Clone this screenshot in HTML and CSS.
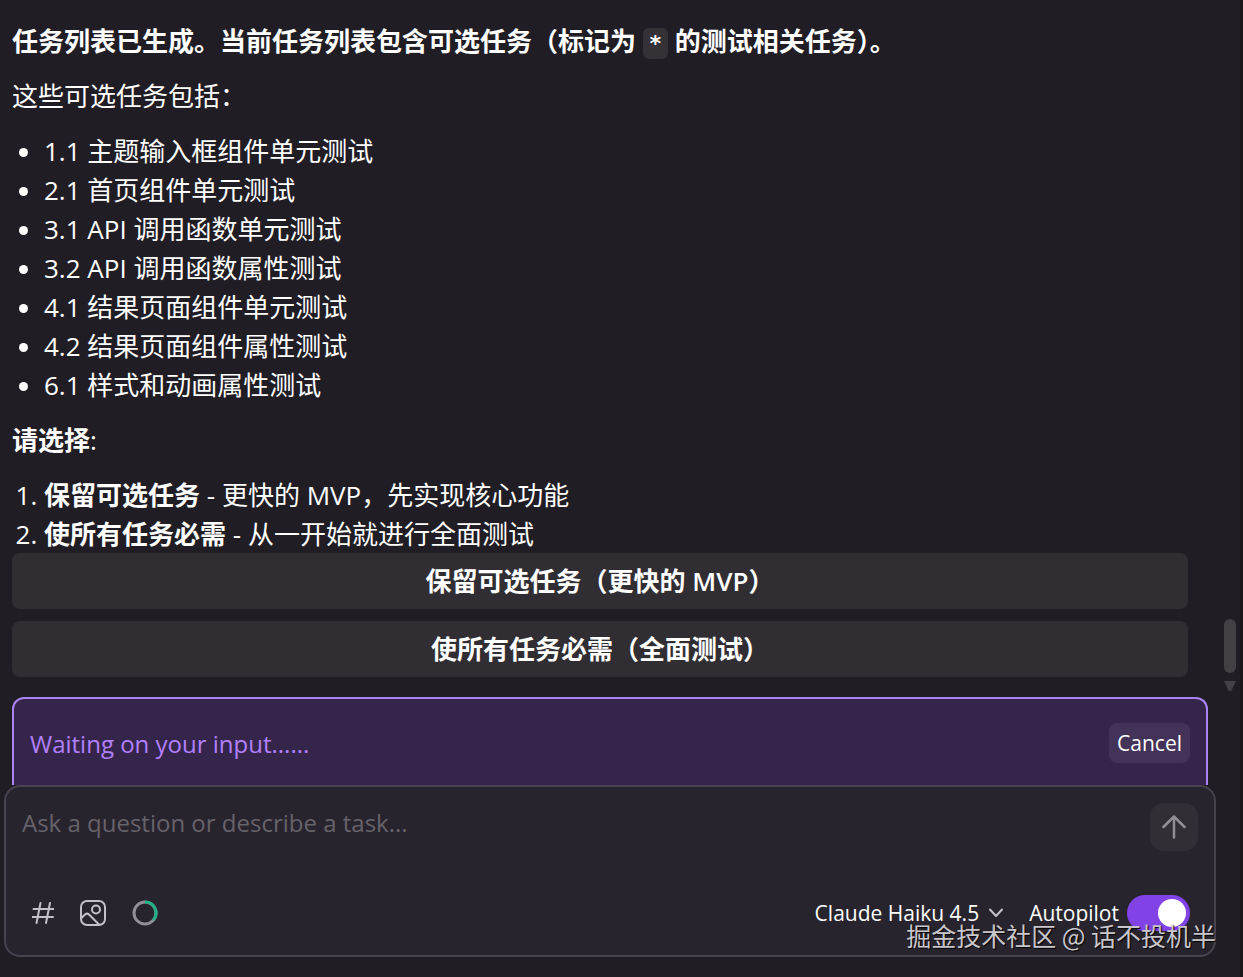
FILE: index.html
```html
<!DOCTYPE html>
<html lang="zh-CN">
<head>
    <meta charset="UTF-8">
    <meta name="viewport" content="width=device-width, initial-scale=1.0">
    <title>任务列表</title>
    <link rel="stylesheet" href="styles.css">
</head>
<body>
    <div class="panel">
        <main class="chat">
            <div class="message">
                <p><strong>任务列表已生成。当前任务列表包含可选任务（标记为 <code>*</code> 的测试相关任务）。</strong></p>
                <p>这些可选任务包括：</p>
                <ul>
                    <li>1.1 主题输入框组件单元测试</li>
                    <li>2.1 首页组件单元测试</li>
                    <li>3.1 API 调用函数单元测试</li>
                    <li>3.2 API 调用函数属性测试</li>
                    <li>4.1 结果页面组件单元测试</li>
                    <li>4.2 结果页面组件属性测试</li>
                    <li>6.1 样式和动画属性测试</li>
                </ul>
                <p><strong>请选择</strong>:</p>
                <ol>
                    <li><strong>保留可选任务</strong> - 更快的 MVP，先实现核心功能</li>
                    <li><strong>使所有任务必需</strong> - 从一开始就进行全面测试</li>
                </ol>
            </div>

            <div class="options">
                <button type="button" class="option">保留可选任务（更快的 MVP）</button>
                <button type="button" class="option">使所有任务必需（全面测试）</button>
            </div>

            <div class="status">
                <span>Waiting on your input......</span>
                <button type="button" class="cancel">Cancel</button>
            </div>

            <div class="scrollbar">
                <div class="thumb"></div>
                <div class="arrow"></div>
            </div>
        </main>

        <form class="composer">
            <div class="composer-top">
                <textarea aria-label="Message" placeholder="Ask a question or describe a task..."></textarea>
                <button type="button" class="send" aria-label="Send">
                    <svg width="24" height="24" viewBox="0 0 24 24"><path d="M12 22.500V1.500M1.500 12 12 1.500 22.500 12"/></svg>
                </button>
            </div>
            <div class="composer-bottom">
                <div class="tools">
                    <button type="button" aria-label="Add context">
                        <svg width="22" height="22" viewBox="0 0 22 22"><path d="M8.500 1 4.500 21M18 1 14 21M1.500 7H22M0 15H21"/></svg>
                    </button>
                    <button type="button" aria-label="Add image">
                        <svg width="26" height="26" viewBox="0 0 26 26"><rect x="1" y="1" width="24" height="24" rx="6"/><circle cx="16" cy="9.500" r="4"/><path d="M1.500 18 5 14.500Q7 12.800 9 14.500L19 24.500"/></svg>
                    </button>
                    <button type="button" aria-label="Context usage">
                        <svg class="usage" width="26" height="26" viewBox="0 0 26 26"><circle cx="13" cy="13" r="11"/><path d="M13 2A11 11 0 0 1 21.500 20"/></svg>
                    </button>
                </div>
                <div class="settings">
                    <button type="button" class="model">
                        Claude Haiku 4.5
                        <svg width="14" height="10" viewBox="0 0 14 10"><path d="M1 1.500 7 8 13 1.500"/></svg>
                    </button>
                    <label class="autopilot">
                        Autopilot
                        <input type="checkbox" checked>
                    </label>
                </div>
            </div>
        </form>
        <div class="watermark">掘金技术社区 @ 话不投机半</div>
    </div>
</body>
</html>
```
FILE: styles.css
```css
* {
    box-sizing: border-box;
}

body {
    margin: 0;
    background-color: #211d25;
    color: #fff;
    font-family: "Open Sans", "Noto Sans CJK SC", sans-serif;
    font-size: 26px;
    line-height: 39px;
}

button {
    border: 0;
    padding: 0;
    background: none;
    color: inherit;
    font: inherit;
    cursor: pointer;
}

svg {
    display: block;
    fill: none;
    stroke: #c4bfcb;
    stroke-width: 2;
    stroke-linecap: round;
    stroke-linejoin: round;
}

.panel {
    position: relative;
    display: flex;
    flex-direction: column;
    min-height: 100vh;
    padding-bottom: 20px;
    border-right: 3px solid #19161c;
}

.chat {
    position: relative;
    flex: 1;
    display: flex;
    flex-direction: column;
    padding: 22px 32px 0 12px;
}

.message p {
    margin: 0 0 16px;
}

.message ul,
.message ol {
    margin: 0 0 16px;
    padding-left: 32px;
}

.message ol {
    margin-bottom: -1px;
}

.message code {
    padding: 3px 6px;
    border-radius: 6px;
    background-color: #343137;
    font-family: "DejaVu Sans Mono", monospace;
    font-size: 22px;
    line-height: 24px;
}

.options {
    display: flex;
    flex-direction: column;
    gap: 12px;
    margin: 0 20px 20px 0;
}

.option {
    height: 56px;
    border-radius: 8px;
    background-color: #312e33;
    font-weight: 600;
}

.status {
    flex: 1;
    display: flex;
    align-items: center;
    justify-content: space-between;
    min-height: 88px;
    padding: 2px 16px 0;
    border: 2px solid #a984f5;
    border-bottom: 0;
    border-radius: 12px 12px 0 0;
    background-color: #36254b;
    color: #b080ff;
    font-size: 24px;
}

.cancel {
    height: 40px;
    padding: 0 8px;
    border-radius: 8px;
    background-color: #443358;
    color: #fff;
    font-size: 21px;
}

.scrollbar {
    position: absolute;
    right: 4px;
    bottom: 94px;
    width: 12px;
}

.thumb {
    height: 54px;
    margin-bottom: 8px;
    border-radius: 6px;
    background-color: #444146;
}

.arrow {
    height: 10px;
    background-color: #444146;
    clip-path: polygon(0 0, 100% 0, 60% 100%, 40% 100%);
}

.composer {
    display: flex;
    flex-direction: column;
    gap: 26px;
    margin: 0 24px 0 4px;
    padding: 16px 16px 22px;
    border: 2px solid #47424e;
    border-radius: 16px;
    background-color: #28242e;
}

.composer-top {
    display: flex;
    justify-content: space-between;
    gap: 16px;
}

.composer-top textarea {
    flex: 1;
    height: 64px;
    padding: 0;
    border: 0;
    outline: 0;
    resize: none;
    background: none;
    color: #fff;
    font: inherit;
    font-size: 24px;
}

.composer-top textarea::placeholder {
    color: #66636a;
}

.send {
    display: grid;
    place-items: center;
    width: 48px;
    height: 48px;
    border-radius: 14px;
    background-color: #312e35;
}

.send svg {
    stroke: #918e94;
    stroke-width: 2.5;
}

.composer-bottom,
.tools,
.settings,
.model,
.autopilot {
    display: flex;
    align-items: center;
}

.composer-bottom {
    justify-content: space-between;
    height: 40px;
    padding: 0 8px 0 10px;
    font-size: 21px;
}

.tools {
    gap: 26px;
}

.usage {
    stroke: #918e96;
    stroke-width: 3;
    stroke-linecap: butt;
}

.usage path {
    stroke: #21b184;
}

.settings {
    gap: 26px;
}

.model {
    gap: 10px;
}

.autopilot {
    gap: 8px;
}

.autopilot input {
    appearance: none;
    display: flex;
    align-items: center;
    justify-content: flex-end;
    width: 63px;
    height: 36px;
    margin: 0;
    padding: 4px;
    border-radius: 18px;
    background-color: #8142e6;
}

.autopilot input::before {
    content: "";
    width: 28px;
    height: 28px;
    border-radius: 50%;
    background-color: #fff;
}

.watermark {
    position: absolute;
    right: 24px;
    bottom: 24px;
    color: #c9c6cc;
    font-family: "Noto Sans CJK SC", sans-serif;
    font-size: 25px;
    line-height: 36px;
    text-shadow: 1px 1px 1px #000;
    pointer-events: none;
}
```
